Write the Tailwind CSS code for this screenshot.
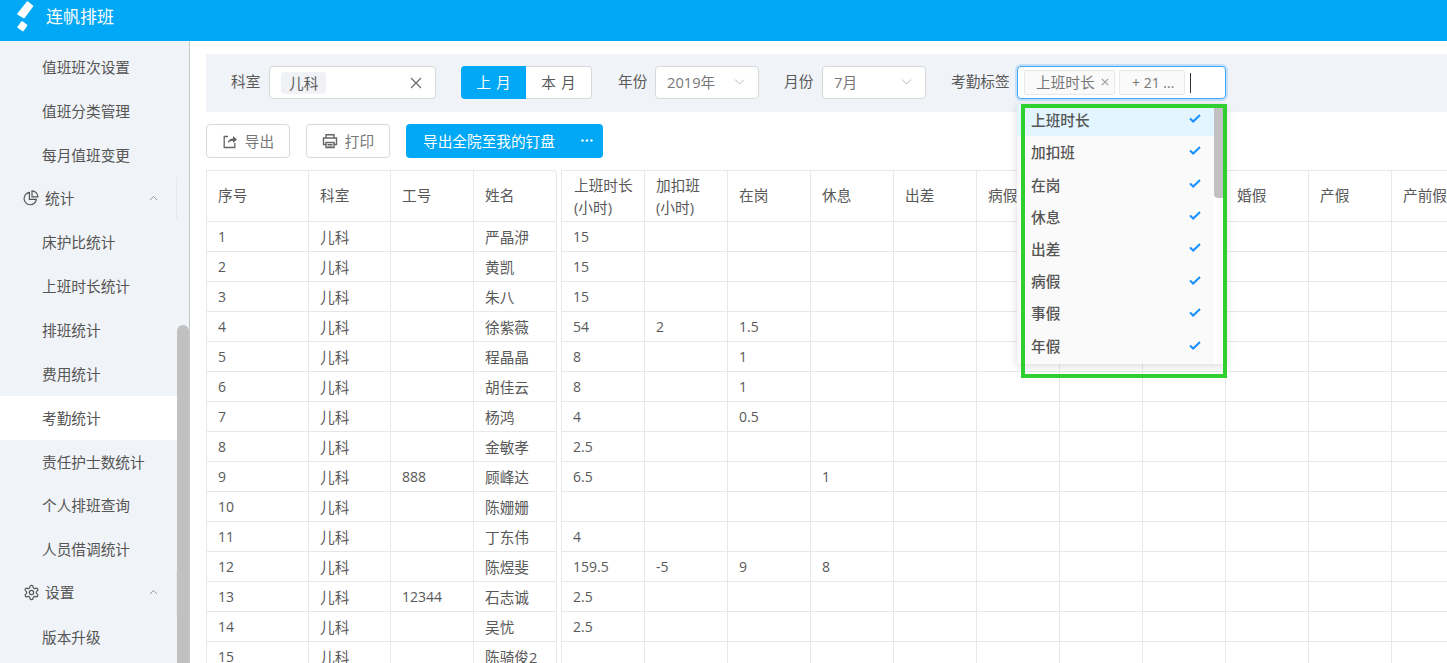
<!DOCTYPE html>
<html lang="zh-CN">
<head>
  <meta charset="utf-8">
  <title>连帆排班</title>
  <script src="https://cdn.jsdelivr.net/npm/@tailwindcss/browser@4"></script>
</head>
<body class="h-[663px] overflow-hidden bg-white text-[14.67px] text-[#595959] font-['Open_Sans','Noto_Sans_CJK_SC',sans-serif]">

  <!-- Top bar -->
  <header class="flex h-[41px] items-start bg-[#00a8f5] pl-[16px] text-white">
    <svg class="mt-[1px] h-[31px] w-[18px]" viewBox="0 0 18 31" fill="#fff" stroke="#fff" stroke-width="1.6" stroke-linejoin="round">
      <path d="M11.5 1 L16.5 5 L8 16.5 L2 13 Z"/>
      <path d="M6 21 L10.5 24.2 L7 29.5 L2 26.2 Z"/>
    </svg>
    <span class="ml-[12px] text-[17px] leading-[34px]">连帆排班</span>
  </header>

  <div class="flex h-[622px]">
    <!-- Sidebar -->
    <aside class="relative h-full w-[190px] shrink-0 overflow-hidden border-r border-[#c8c8c8] bg-[#f0f3f7] pt-[4px] text-[#555]">
      <div class="w-[177px]">
        <a class="flex h-[43.85px] items-center pl-[42px]">值班班次设置</a>
        <a class="flex h-[43.85px] items-center pl-[42px]">值班分类管理</a>
        <a class="flex h-[43.85px] items-center pl-[42px]">每月值班变更</a>
        <div class="flex h-[43.85px] items-center justify-between border-r border-[#e6e9ed] pl-[23px] pr-[18px]">
          <span class="flex items-center gap-[6px]">
            <svg class="h-[16px] w-[16px]" viewBox="0 0 16 16" fill="none" stroke="#555" stroke-width="1.2">
              <path d="M6.4 2.4a6.2 6.2 0 1 0 7 7H6.4z"/>
              <path d="M9 .9a6 6 0 0 1 5.9 5.9H9z"/>
            </svg>
            统计
          </span>
          <svg class="h-[6px] w-[9px]" viewBox="0 0 9 6" fill="none" stroke="#999" stroke-width="1"><path d="M1 5l3.5-3.5L8 5"/></svg>
        </div>
        <a class="flex h-[43.85px] items-center pl-[42px]">床护比统计</a>
        <a class="flex h-[43.85px] items-center pl-[42px]">上班时长统计</a>
        <a class="flex h-[43.85px] items-center pl-[42px]">排班统计</a>
        <a class="flex h-[43.85px] items-center pl-[42px]">费用统计</a>
        <a class="flex h-[43.85px] items-center bg-white pl-[42px]">考勤统计</a>
        <a class="flex h-[43.85px] items-center pl-[42px]">责任护士数统计</a>
        <a class="flex h-[43.85px] items-center pl-[42px]">个人排班查询</a>
        <a class="flex h-[43.85px] items-center pl-[42px]">人员借调统计</a>
        <div class="flex h-[43.85px] items-center justify-between border-r border-[#e6e9ed] pb-[2px] pl-[23px] pr-[18px]">
          <span class="flex items-center gap-[5px]">
            <svg class="h-[17px] w-[17px]" viewBox="0 0 24 24" fill="none" stroke="#555" stroke-width="1.7" stroke-linejoin="round">
              <path d="M12.22 2h-.44a2 2 0 0 0-2 2v.18a2 2 0 0 1-1 1.73l-.43.25a2 2 0 0 1-2 0l-.15-.08a2 2 0 0 0-2.73.73l-.22.38a2 2 0 0 0 .73 2.73l.15.1a2 2 0 0 1 1 1.72v.51a2 2 0 0 1-1 1.74l-.15.09a2 2 0 0 0-.73 2.73l.22.38a2 2 0 0 0 2.73.73l.15-.08a2 2 0 0 1 2 0l.43.25a2 2 0 0 1 1 1.73V20a2 2 0 0 0 2 2h.44a2 2 0 0 0 2-2v-.18a2 2 0 0 1 1-1.73l.43-.25a2 2 0 0 1 2 0l.15.08a2 2 0 0 0 2.73-.73l.22-.39a2 2 0 0 0-.73-2.73l-.15-.08a2 2 0 0 1-1-1.74v-.5a2 2 0 0 1 1-1.74l.15-.09a2 2 0 0 0 .73-2.73l-.22-.38a2 2 0 0 0-2.73-.73l-.15.08a2 2 0 0 1-2 0l-.43-.25a2 2 0 0 1-1-1.73V4a2 2 0 0 0-2-2z"/>
              <circle cx="12" cy="12" r="3"/>
            </svg>
            设置
          </span>
          <svg class="h-[6px] w-[9px]" viewBox="0 0 9 6" fill="none" stroke="#999" stroke-width="1"><path d="M1 5l3.5-3.5L8 5"/></svg>
        </div>
        <a class="flex h-[43.85px] items-center pl-[42px]">版本升级</a>
      </div>
      <!-- sidebar scrollbar -->
      <div class="absolute right-0 top-[284px] h-[340px] w-[12px] rounded-t-[6px] bg-[#c1c1c1]"></div>
    </aside>

    <!-- Main -->
    <main class="min-w-0 flex-1 overflow-hidden pl-[16px] pt-[13px]">
      <!-- Filters -->
      <div class="flex h-[58px] items-start bg-[#f0f3f7] pl-[25px] pt-[12px] leading-[31px]">
        <span class="w-[38px] shrink-0">科室</span>
        <div class="flex h-[33px] w-[167px] shrink-0 items-center justify-between rounded-[4px] border border-[#d9d9d9] bg-white pl-[11px] pr-[13px]">
          <span class="rounded-[4px] bg-[#f0f2f5] px-[8px] leading-[22px]">儿科</span>
          <svg class="h-[12px] w-[12px]" viewBox="0 0 12 12" stroke="#666" stroke-width="1.1"><path d="M1 1l10 10M11 1L1 11"/></svg>
        </div>
        <div class="ml-[25px] flex h-[33px] w-[131px] shrink-0">
          <span class="flex w-[65px] items-center justify-center rounded-l-[4px] bg-[#00a8f5] pb-[1px] pl-[5px] tracking-[5px] text-white">上月</span>
          <span class="flex flex-1 items-center justify-center rounded-r-[4px] border border-l-0 border-[#d9d9d9] bg-white pb-[1px] pl-[5px] tracking-[5px]">本月</span>
        </div>
        <span class="ml-[26px] w-[37px] shrink-0">年份</span>
        <div class="flex h-[33px] w-[104px] shrink-0 items-center justify-between rounded-[4px] border border-[#d9d9d9] bg-white pb-[1px] pl-[11px] pr-[13px] text-[#777]">
          2019年
          <svg class="h-[6px] w-[11px]" viewBox="0 0 11 6" fill="none" stroke="#bbb" stroke-width="1"><path d="M1 .5l4.5 4.5L10 .5"/></svg>
        </div>
        <span class="ml-[25px] w-[38px] shrink-0">月份</span>
        <div class="flex h-[33px] w-[104px] shrink-0 items-center justify-between rounded-[4px] border border-[#d9d9d9] bg-white pb-[1px] pl-[11px] pr-[13px] text-[#777]">
          7月
          <svg class="h-[6px] w-[11px]" viewBox="0 0 11 6" fill="none" stroke="#bbb" stroke-width="1"><path d="M1 .5l4.5 4.5L10 .5"/></svg>
        </div>
        <span class="ml-[25px] w-[66px] shrink-0">考勤标签</span>
        <!-- Tag select, open -->
        <div class="relative flex h-[33px] w-[209px] shrink-0 items-center rounded-[4px] border border-[#40a9ff] bg-white pl-[6px] shadow-[0_0_0_2px_rgba(24,144,255,0.2)]">
          <span class="flex h-[25px] w-[91px] items-center justify-between rounded-[2px] border border-[#e8e8e8] bg-[#fafafa] pb-[1px] pl-[11px] pr-[5px] text-[#777]">
            上班时长
            <svg class="h-[8px] w-[8px]" viewBox="0 0 8 8" stroke="#999" stroke-width="1.1"><path d="M.8.8l6.4 6.4M7.2.8L.8 7.2"/></svg>
          </span>
          <span class="ml-[4px] flex h-[25px] w-[66px] items-center rounded-[2px] border border-[#e8e8e8] bg-[#fafafa] pb-[1px] pl-[12px] text-[14px] text-[#777]">+ 21 ...</span>
          <span class="ml-[5px] h-[20px] w-px bg-[#333]"></span>

          <div class="absolute left-[-1px] top-[37px] z-10 flex h-[260px] w-[209px] bg-white leading-normal shadow-[0_2px_8px_rgba(0,0,0,0.15)]">
            <ul class="w-[197px] bg-[#fafafa] font-medium text-[#555]">
              <li class="flex h-[32.3px] items-center justify-between bg-[#e3f5ff] pl-[14px] pr-[13px]">上班时长<svg class="mb-[3px] h-[9px] w-[12px]" viewBox="0 0 12 9" fill="none" stroke="#1890ff" stroke-width="2"><path d="M1 4.5l3.2 3L11 1"/></svg></li>
              <li class="flex h-[32.3px] items-center justify-between pl-[14px] pr-[13px]">加扣班<svg class="mb-[3px] h-[9px] w-[12px]" viewBox="0 0 12 9" fill="none" stroke="#1890ff" stroke-width="2"><path d="M1 4.5l3.2 3L11 1"/></svg></li>
              <li class="flex h-[32.3px] items-center justify-between pl-[14px] pr-[13px]">在岗<svg class="mb-[3px] h-[9px] w-[12px]" viewBox="0 0 12 9" fill="none" stroke="#1890ff" stroke-width="2"><path d="M1 4.5l3.2 3L11 1"/></svg></li>
              <li class="flex h-[32.3px] items-center justify-between pl-[14px] pr-[13px]">休息<svg class="mb-[3px] h-[9px] w-[12px]" viewBox="0 0 12 9" fill="none" stroke="#1890ff" stroke-width="2"><path d="M1 4.5l3.2 3L11 1"/></svg></li>
              <li class="flex h-[32.3px] items-center justify-between pl-[14px] pr-[13px]">出差<svg class="mb-[3px] h-[9px] w-[12px]" viewBox="0 0 12 9" fill="none" stroke="#1890ff" stroke-width="2"><path d="M1 4.5l3.2 3L11 1"/></svg></li>
              <li class="flex h-[32.3px] items-center justify-between pb-[2px] pl-[14px] pr-[13px]">病假<svg class="mb-[1px] h-[9px] w-[12px]" viewBox="0 0 12 9" fill="none" stroke="#1890ff" stroke-width="2"><path d="M1 4.5l3.2 3L11 1"/></svg></li>
              <li class="flex h-[32.3px] items-center justify-between pb-[1px] pl-[14px] pr-[13px]">事假<svg class="mb-[2px] h-[9px] w-[12px]" viewBox="0 0 12 9" fill="none" stroke="#1890ff" stroke-width="2"><path d="M1 4.5l3.2 3L11 1"/></svg></li>
              <li class="flex h-[32.3px] items-center justify-between pl-[14px] pr-[13px]">年假<svg class="mb-[2px] h-[9px] w-[12px]" viewBox="0 0 12 9" fill="none" stroke="#1890ff" stroke-width="2"><path d="M1 4.5l3.2 3L11 1"/></svg></li>
            </ul>
            <div class="flex-1"><div class="h-[94px] rounded-b-[4px] bg-[#c1c1c1]"></div></div>
          </div>
          <!-- green annotation box -->
          <div class="absolute left-[3px] top-[37px] z-20 h-[274px] w-[206px] border-4 border-[#2ecf2e]"></div>
        </div>
      </div>

      <!-- Actions -->
      <div class="mt-[12px] flex h-[34px] text-[#777]">
        <button class="flex w-[84px] items-center justify-center gap-[7px] rounded-[4px] border border-[#d9d9d9] pb-[1px]">
          <svg class="h-[16px] w-[16px]" viewBox="0 0 16 16" fill="none" stroke="#666" stroke-width="1.3">
            <path d="M6 3.5H2.2v11h10.6V10"/>
            <path d="M5.6 10.5C6 7 8.2 5.4 11 5.4V3l4 3.6-4 3.4V8C9 8 7 8.6 5.6 10.5z" fill="#666" stroke="none"/>
          </svg>
          导出
        </button>
        <button class="ml-[16px] flex w-[84px] items-center justify-center gap-[7px] rounded-[4px] border border-[#d9d9d9] pb-[1px]">
          <svg class="h-[16px] w-[16px]" viewBox="0 0 16 16" fill="none" stroke="#666" stroke-width="1.4">
            <path d="M4 5V1.7h8V5"/>
            <path d="M4 11.5H1.5V5h13v6.5H12"/>
            <path d="M4 9.5h8v5H4z"/>
            <path d="M5.5 11.5h5M5.5 13h5" stroke-width="1"/>
          </svg>
          打印
        </button>
        <button class="ml-[16px] flex w-[197px] items-center justify-between rounded-[4px] bg-[#00a8f5] pb-[1px] pl-[17px] pr-[10px] text-white">
          导出全院至我的钉盘
          <svg class="h-[3px] w-[12px]" viewBox="0 0 12 3" fill="#fff"><circle cx="1.5" cy="1.5" r="1.2"/><circle cx="6" cy="1.5" r="1.2"/><circle cx="10.5" cy="1.5" r="1.2"/></svg>
        </button>
      </div>

      <!-- Table: fixed columns + scrolling columns -->
      <div class="mt-[12px] flex h-[500px] items-start overflow-hidden">
        <table class="w-[351px] shrink-0 table-fixed border-separate border-spacing-0 rounded-tr-[4px]">
          <colgroup><col class="w-[103px]"><col class="w-[82px]"><col class="w-[83px]"><col class="w-[83px]"></colgroup>
          <thead><tr>
            <th class="h-[52px] border-b border-l border-r border-t border-[#e8e8e8] pb-[3px] pl-[11px] text-left font-normal">序号</th>
            <th class="border-b border-r border-t border-[#e8e8e8] pb-[3px] pl-[11px] text-left font-normal">科室</th>
            <th class="border-b border-r border-t border-[#e8e8e8] pb-[3px] pl-[11px] text-left font-normal">工号</th>
            <th class="rounded-tr-[4px] border-b border-r border-t border-[#e8e8e8] pb-[3px] pl-[11px] text-left font-normal">姓名</th>
          </tr></thead>
          <tbody id="fixedRows"></tbody>
        </table>
        <table class="ml-[4px] w-[997px] shrink-0 table-fixed border-separate border-spacing-0">
          <colgroup><col class="w-[84px]"><col class="w-[83px]"><col class="w-[83px]"><col class="w-[83px]"><col class="w-[83px]"><col class="w-[83px]"><col class="w-[83px]"><col class="w-[83px]"><col class="w-[83px]"><col class="w-[83px]"><col class="w-[83px]"><col class="w-[83px]"></colgroup>
          <thead><tr>
            <th class="h-[52px] border-b border-l border-r border-t border-[#e8e8e8] pl-[12px] text-left font-normal leading-[22px]">上班时长<br>(小时)</th>
            <th class="border-b border-r border-t border-[#e8e8e8] pl-[11px] text-left font-normal leading-[22px]">加扣班<br>(小时)</th>
            <th class="border-b border-r border-t border-[#e8e8e8] pb-[2px] pl-[11px] text-left font-normal">在岗</th>
            <th class="border-b border-r border-t border-[#e8e8e8] pb-[3px] pl-[11px] text-left font-normal">休息</th>
            <th class="border-b border-r border-t border-[#e8e8e8] pb-[3px] pl-[11px] text-left font-normal">出差</th>
            <th class="border-b border-r border-t border-[#e8e8e8] pb-[3px] pl-[11px] text-left font-normal">病假</th>
            <th class="border-b border-r border-t border-[#e8e8e8] pb-[3px] pl-[11px] text-left font-normal">事假</th>
            <th class="border-b border-r border-t border-[#e8e8e8] pb-[3px] pl-[11px] text-left font-normal">年假</th>
            <th class="border-b border-r border-t border-[#e8e8e8] pb-[3px] pl-[11px] text-left font-normal">婚假</th>
            <th class="border-b border-r border-t border-[#e8e8e8] pb-[3px] pl-[11px] text-left font-normal">产假</th>
            <th class="border-b border-r border-t border-[#e8e8e8] pb-[3px] pl-[11px] text-left font-normal">产前假</th>
            <th class="border-b border-r border-t border-[#e8e8e8] pl-[11px] text-left font-normal"></th>
          </tr></thead>
          <tbody id="scrollRows" class="text-[14px]"></tbody>
        </table>
      </div>
    </main>
  </div>

  <script>
    var rows = [
      ['严晶洢', '', '15', '', '', ''],
      ['黄凯', '', '15', '', '', ''],
      ['朱八', '', '15', '', '', ''],
      ['徐紫薇', '', '54', '2', '1.5', ''],
      ['程晶晶', '', '8', '', '1', ''],
      ['胡佳云', '', '8', '', '1', ''],
      ['杨鸿', '', '4', '', '0.5', ''],
      ['金敏孝', '', '2.5', '', '', ''],
      ['顾峰达', '888', '6.5', '', '', '1'],
      ['陈姗姗', '', '', '', '', ''],
      ['丁东伟', '', '4', '', '', ''],
      ['陈煜斐', '', '159.5', '-5', '9', '8'],
      ['石志诚', '12344', '2.5', '', '', ''],
      ['吴忧', '', '2.5', '', '', ''],
      ['陈骑俊2', '', '', '', '', '']
    ];
    var cell = 'h-[30px] border-b border-r border-[#e8e8e8] pl-[11px]';
    var first = 'h-[30px] border-b border-l border-r border-[#e8e8e8] pl-[11px]';
    var fixedHtml = '', scrollHtml = '';
    rows.forEach(function (r, i) {
      fixedHtml += '<tr><td class="' + first + ' text-[14px]">' + (i + 1) + '</td><td class="' + cell + '">儿科</td><td class="' + cell + ' text-[14px]">' + r[1] + '</td><td class="' + cell + '">' + r[0] + '</td></tr>';
      var tds = '<td class="' + first + '">' + r[2] + '</td>';
      for (var c = 1; c < 12; c++) {
        var v = c < 4 ? r[c + 2] : '';
        tds += '<td class="' + cell + '">' + v + '</td>';
      }
      scrollHtml += '<tr>' + tds + '</tr>';
    });
    document.getElementById('fixedRows').innerHTML = fixedHtml;
    document.getElementById('scrollRows').innerHTML = scrollHtml;
  </script>
</body>
</html>
